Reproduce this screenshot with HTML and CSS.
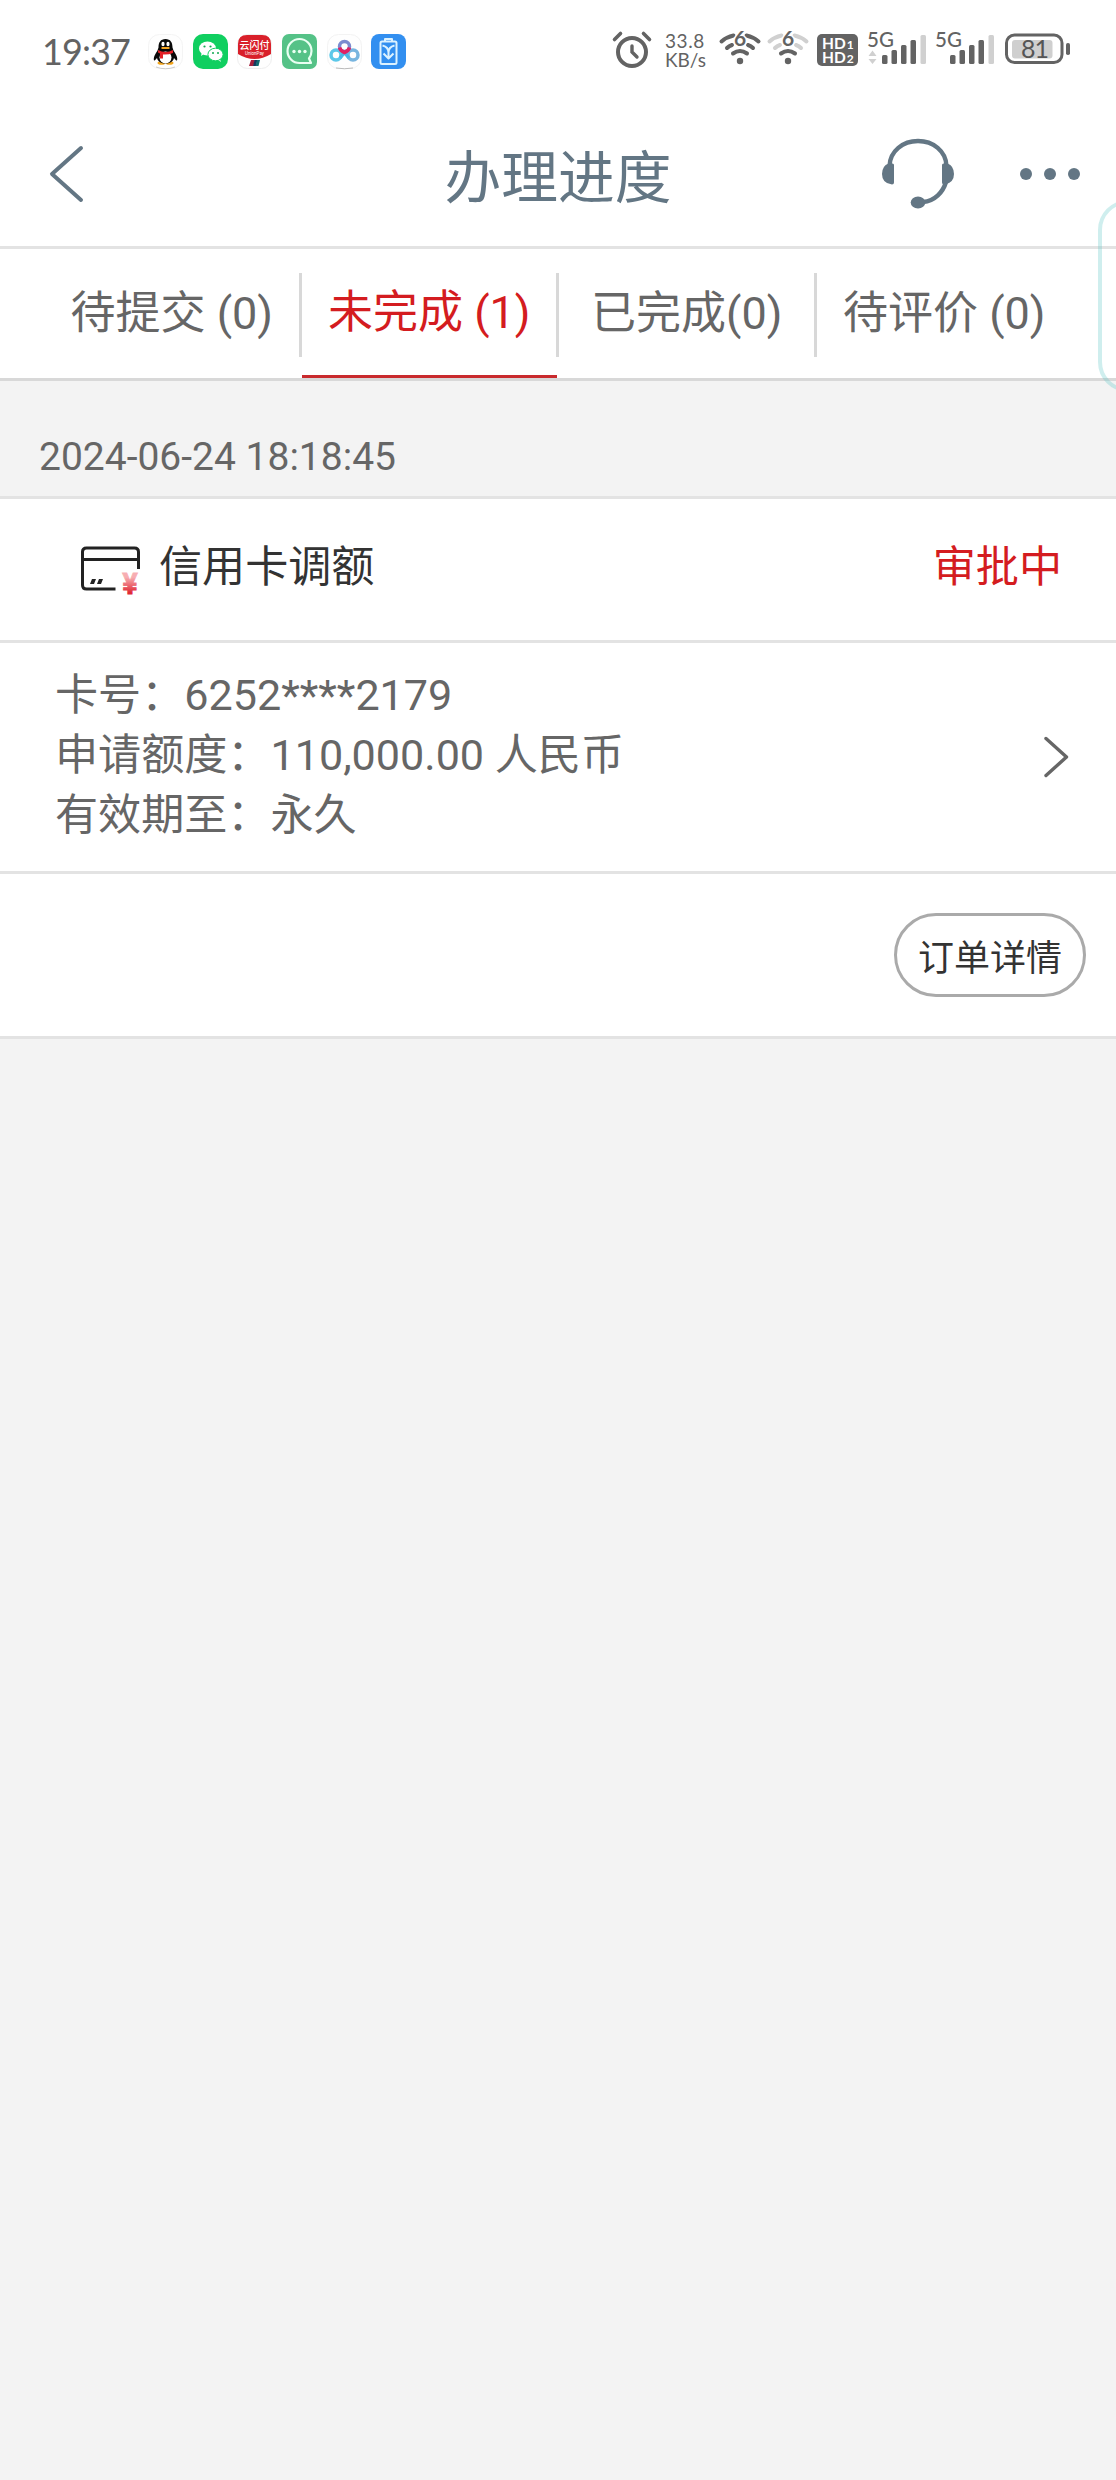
FILE: index.html
```html
<!DOCTYPE html>
<html lang="zh-CN">
<head>
<meta charset="utf-8">
<title>办理进度</title>
<link rel="stylesheet" href="styles.css">
</head>
<body>
<div class="screen">
  <div class="statusbar">
    <span class="clock">19:37</span>
    <div class="apps">
      <svg class="app" viewBox="0 0 35 35">
        <rect x=".5" y=".5" width="34" height="34" rx="11" fill="#fefefe" stroke="#f4f4f4"/>
        <path d="M8 33Q17.500 36.500 27 33" fill="none" stroke="#ccc"/>
        <ellipse cx="13.500" cy="29" rx="4" ry="1.800" fill="#f2a51d"/><ellipse cx="21.500" cy="29" rx="4" ry="1.800" fill="#f2a51d"/>
        <path d="M17.500 5c-5 0-7 3.500-7 8.500l-1 3c-2 3-4.500 7-3.500 10 1 .5 2-1.500 3-2.500 1 4 4.500 5.500 8.500 5.500s7.500-1.500 8.500-5.500c1 1 2 3 3 2.500 1-3-1.500-7-3.500-10l-1-3c0-5-2-8.500-7-8.500z" fill="#090909"/>
        <ellipse cx="17.500" cy="23.500" rx="6" ry="6" fill="#fff"/>
        <ellipse cx="15" cy="10" rx="1.600" ry="2.300" fill="#fff"/><ellipse cx="20" cy="10" rx="1.600" ry="2.300" fill="#fff"/>
        <path d="M13.500 14h8" stroke="#f5a623" stroke-width="2"/>
        <path d="M10 16q7.500 4 15 0v3q-5 2-10 1.500v4h-3v-5l-2-1z" fill="#e32026"/>
      </svg>
      <svg class="app" viewBox="0 0 35 35">
        <rect width="35" height="35" rx="10" fill="#10cf60"/>
        <path d="M8 22l1-4h5z" fill="#fff"/><ellipse cx="14.500" cy="14.500" rx="8.500" ry="7" fill="#fff"/>
        <path d="M28 28l-1.500-4h-4z" fill="#fff"/><ellipse cx="22.500" cy="20.500" rx="7.600" ry="6.300" fill="#fff" stroke="#10cf60"/>
        <g fill="#10a950"><circle cx="11.500" cy="12.500" r="1.100"/><circle cx="17.500" cy="12.500" r="1.100"/><circle cx="20" cy="19" r="1"/><circle cx="25" cy="19" r="1"/></g>
      </svg>
      <svg class="app" viewBox="0 0 35 35">
        <rect x=".5" y=".5" width="34" height="34" rx="10" fill="#fefefe" stroke="#eee"/>
        <path d="M1 20V10Q1 1 10 1h15q9 0 9 9v10Q26 25 17.500 25T1 20z" fill="#d9202a"/>
        <text x="17.500" y="15" class="pay-name">云闪付</text>
        <text x="17.500" y="20.500" class="pay-sub">UnionPay</text>
        <path d="M14 26h4l-1.500 6H12z" fill="#a51f3c"/><path d="M17.500 26h3L19 32h-3z" fill="#17375d"/><path d="M20 26h3l-1.500 6h-3z" fill="#116b70"/>
      </svg>
      <svg class="app" viewBox="0 0 35 35">
        <rect width="35" height="35" rx="7" fill="#55c287"/>
        <path d="M29 29h-11.500a12 12 0 1 1 12-12q0 4-2.500 7.500z" fill="none" stroke="#e9fff2" stroke-width="2.200" stroke-linejoin="round"/>
        <g fill="#e9fff2"><circle cx="12" cy="17.500" r="1.700"/><circle cx="17.500" cy="17.500" r="1.700"/><circle cx="23" cy="17.500" r="1.700"/></g>
      </svg>
      <svg class="app" viewBox="0 0 35 35">
        <rect x=".5" y=".5" width="34" height="34" rx="11" fill="#fefefe" stroke="#f3f3f3"/>
        <path d="M9 34Q17.500 35.500 26 34" fill="none" stroke="#bbb"/>
        <g fill="none" stroke-width="3.500"><circle cx="9" cy="21" r="5" stroke="#5cc8e9"/><circle cx="26" cy="21" r="5" stroke="#78b5df"/><path d="M13 24l5-6M22 24l-5-6" stroke="#4ab9e6"/><circle cx="17.500" cy="12.500" r="5" stroke="#7b8bd0"/><path d="M12.500 13.500q1 3.500 5 5 4-1.500 5-5" stroke="#df2264"/></g>
      </svg>
      <svg class="app" viewBox="0 0 35 35">
        <rect width="35" height="35" rx="8" fill="#328ff0"/>
        <g fill="none" stroke="#dcf2ff" stroke-width="2" stroke-linejoin="round"><rect x="9.500" y="7.500" width="16" height="22.500" rx="1.500"/><path d="M14 7V5h7v2M11.500 11.500q6 1.500 6 7v6M23.500 11.500q-6 1.500-6 7v6M12.500 19.500l5 5 5-5"/></g>
      </svg>
    </div>
    <div class="system">
      <svg class="sys alarm" viewBox="0 0 40 40">
        <g fill="none" stroke="#636363" stroke-linecap="round"><circle cx="20" cy="22" r="14" stroke-width="4"/><path d="M2.500 9.500l6-6M37.500 9.500l-6-6" stroke-width="3.600"/><path d="M20 16v6l5 5" stroke-width="3.400"/></g>
      </svg>
      <div class="speed"><span>33.8</span><span>KB/s</span></div>
      <svg class="sys wifi" viewBox="0 0 42 40">
        <g fill="none" stroke="#636363" stroke-width="4" stroke-linecap="round"><path d="M2.500 11.500q5-4.500 12-6M39.500 11.500q-5-4.500-12-6M8 18q2-2 5-3M34 18q-2-2-5-3M14 23.500q7-5 14 0"/></g>
        <circle cx="21" cy="31" r="3.200" fill="#636363"/><text x="21" y="16" class="six">6</text>
      </svg>
      <svg class="sys wifi wifi-second" viewBox="0 0 42 40">
        <g fill="none" stroke="#d0d0d0" stroke-width="4" stroke-linecap="round"><path d="M2.500 11.500q5-4.500 12-6M39.500 11.500q-5-4.500-12-6M8 18q2-2 5-3M34 18q-2-2-5-3"/><path d="M14 23.500q7-5 14 0" stroke="#636363"/></g>
        <circle cx="21" cy="31" r="3.200" fill="#636363"/><text x="21" y="16" class="six">6</text>
      </svg>
      <div class="hd"><span>HD<small>1</small></span><span>HD<small>2</small></span></div>
      <svg class="sys signal" viewBox="0 0 60 40">
        <text x="0" y="16.500" class="net">5G</text>
        <path d="M1.500 26l4-5.500 4 5.500zM1.500 29l4 5 4-5z" fill="#d0d0d0"/>
        <g fill="#636363"><rect x="15" y="25" width="5.500" height="9" rx="1.500"/><rect x="24.500" y="20" width="5.500" height="14" rx="1.500"/><rect x="34" y="15" width="5.500" height="19" rx="1.500"/><rect x="43.500" y="10" width="5.500" height="24" rx="1.500"/></g><rect x="53.500" y="5" width="5.500" height="29" rx="1.500" fill="#d0d0d0"/>
      </svg>
      <svg class="sys signal signal-second" viewBox="0 0 60 40">
        <text x="0" y="16.500" class="net">5G</text>
        <g fill="#636363"><rect x="15" y="25" width="5.500" height="9" rx="1.500"/><rect x="24.500" y="20" width="5.500" height="14" rx="1.500"/><rect x="34" y="15" width="5.500" height="19" rx="1.500"/><rect x="43.500" y="10" width="5.500" height="24" rx="1.500"/></g><rect x="53.500" y="5" width="5.500" height="29" rx="1.500" fill="#d0d0d0"/>
      </svg>
      <svg class="sys battery" viewBox="0 0 66 40">
        <rect x="1.500" y="5" width="55.500" height="27.500" rx="8" fill="none" stroke="#636363" stroke-width="3"/>
        <rect x="7" y="10" width="40.500" height="18.500" rx="3" fill="#cfcfcf"/><rect x="61" y="13" width="4" height="12" rx="1.800" fill="#636363"/>
        <text x="29.500" y="28" class="level">81</text>
      </svg>
    </div>
  </div>

  <header class="header">
    <svg class="back" viewBox="0 0 40 60"><path d="M35 4L6 30l29 26" fill="none" stroke="#637684" stroke-width="4" stroke-linecap="round" stroke-linejoin="round"/></svg>
    <h1 class="title">办理进度</h1>
    <div class="actions">
      <svg class="headset" viewBox="0 0 72 72">
        <g fill="none" stroke="#637684" stroke-width="4.400"><path d="M7.500 28C8 13 21 3 36 3s28 10 28.500 25M64 44c-3 10-11 19-23 20"/></g>
        <path d="M6.500 25.500h4q1.500 0 1.500 1.500v17.500q0 2-2 2-10-1-10-10.500 0-8 6.500-10.500zM65.500 25.500h-4q-1.500 0-1.500 1.500v17.500q0 2 2 2 10-1 10-10.500 0-8-6.500-10.500z" fill="#637684"/><ellipse cx="36" cy="64.500" rx="7.300" ry="6" fill="#637684"/>
      </svg>
      <svg class="more" viewBox="0 0 60 12"><g fill="#637684"><circle cx="6" cy="6" r="6"/><circle cx="30" cy="6" r="6"/><circle cx="54" cy="6" r="6"/></g></svg>
    </div>
  </header>

  <nav class="tabs">
    <a class="tab">待提交 (0)</a>
    <a class="tab tab-active">未完成 (1)</a>
    <a class="tab">已完成(0)</a>
    <a class="tab">待评价 (0)</a>
  </nav>

  <time class="date">2024-06-24 18:18:45</time>

  <section class="order">
    <div class="order-head">
      <svg class="card-icon" viewBox="0 0 60 52">
        <defs><linearGradient id="yen" x1="0" y1="0" x2="0" y2="1"><stop offset=".3" stop-color="#f7aeb2"/><stop offset=".75" stop-color="#e02a35"/></linearGradient></defs>
        <path d="M36 45H7q-4 0-4-4V8q0-4 4-4h48q4 0 4 4v17M3 15.500h56" transform="translate(-.5 -2)" fill="none" stroke="#222" stroke-width="3"/>
        <path d="M10 38l2-5h4L14 38zM17 38l2-5h4L21 38z" fill="#222"/>
        <text x="50" y="48" class="yen" fill="url(#yen)" stroke="url(#yen)">¥</text>
      </svg>
      <span class="order-name">信用卡调额</span>
      <span class="order-status">审批中</span>
    </div>
    <div class="order-body">
      <div class="details"><p>卡号：6252****2179</p><p>申请额度：110,000.00 人民币</p><p>有效期至：永久</p></div>
      <svg class="chevron" viewBox="0 0 26 42"><path d="M3 2.500L23.500 21 3 39.500" fill="none" stroke="#666" stroke-width="3.400" stroke-linecap="round" stroke-linejoin="round"/></svg>
    </div>
    <div class="order-foot"><button class="detail-button">订单详情</button></div>
  </section>
  <div class="edge-handle"></div>
</div>
</body>
</html>
```
FILE: styles.css
```css
* { box-sizing: border-box; }
body { margin: 0; background: #f3f3f3; color: #666; font-family: Roboto, "Noto Sans CJK SC", sans-serif; }
h1, p { margin: 0; font-weight: 400; }
svg { display: block; flex: none; overflow: visible; }
.screen { position: relative; width: 1116px; height: 2480px; overflow: hidden; }

.statusbar { display: flex; height: 100px; padding: 0 45px 0 42px; background: #fff; color: #636363; font-family: Lato, sans-serif; }
.clock { width: 106px; padding-top: 30px; font-size: 36px; line-height: 42px; letter-spacing: -.9px; white-space: nowrap; }
.apps { display: flex; gap: 9.700px; padding-top: 34px; }
.app { width: 35px; height: 35px; }
.pay-name { font: 500 10px "Noto Sans CJK SC", sans-serif; fill: #fff; text-anchor: middle; }
.pay-sub { font: 4.500px Roboto, sans-serif; fill: #fff; text-anchor: middle; }
.system { display: flex; margin-left: auto; padding-top: 30px; }
.sys { height: 40px; }
.alarm { width: 40px; }
.speed { display: flex; flex-direction: column; width: 54px; margin-left: 13px; padding-top: 1px; font-size: 19px; line-height: 19px; white-space: nowrap; }
.speed span:first-child { letter-spacing: .6px; }
.wifi { width: 42px; }
.wifi-second { margin-left: 6px; }
.six { font: 700 21px Lato, sans-serif; fill: #636363; stroke: #fff; stroke-width: 3px; paint-order: stroke; text-anchor: middle; }
.hd { display: flex; flex-direction: column; width: 41px; height: 32px; margin: 4px 0 0 8px; padding: 2px 0 0 5px; border-radius: 5px; background: #636363; color: #fff; font: 700 15.500px/14px Lato, sans-serif; white-space: nowrap; }
.hd span { height: 14px; }
.hd small { font-size: 12px; line-height: 1; margin-left: 1px; }
.signal { width: 60px; margin-left: 9px; }
.signal-second { margin-left: 8px; }
.net { font: 500 20.500px Lato, sans-serif; fill: #636363; }
.battery { width: 66px; margin-left: 10px; }
.level { font: 25px Lato, sans-serif; fill: #555; text-anchor: middle; letter-spacing: -1px; }

.header { display: grid; grid-template-columns: 1fr auto 1fr; align-items: center; height: 149px; padding: 2px 36px 0 46px; border-bottom: 3px solid #e3e3e3; background: #fff; }
.back { width: 40px; height: 60px; }
.title { padding: 9px 10px 0 0; color: #637684; font-size: 56.700px; line-height: 80px; }
.actions { display: flex; align-items: center; justify-content: flex-end; gap: 66px; }
.headset { width: 72px; height: 72px; }
.more { width: 60px; height: 12px; }

.tabs { display: grid; grid-template-columns: repeat(4, 1fr); height: 132px; padding: 0 42px 0 44px; border-bottom: 3px solid #d8d8d8; background: #fff; }
.tab { display: flex; justify-content: center; padding: 32px 2px 0 0; font-size: 45px; line-height: 66px; white-space: pre; background: linear-gradient(#d8d8d8, #d8d8d8) right 24px / 3px 84px no-repeat; }
.tab:last-child { background: none; }
.tab-active { padding-top: 31px; color: #d41c20; background: linear-gradient(#d8d8d8, #d8d8d8) right 24px / 3px 84px no-repeat, linear-gradient(90deg, #c92a2d 255px, transparent 0) bottom / 100% 3px no-repeat; }

.date { display: block; height: 115px; padding: 50px 0 0 39px; font-size: 39px; line-height: 52px; }
.order { border-top: 3px solid #e3e3e3; border-bottom: 3px solid #e3e3e3; background: #fff; }
.order-head { display: flex; align-items: center; height: 144px; padding: 0 54px 3px 80px; border-bottom: 3px solid #e3e3e3; font-size: 43.100px; line-height: 60px; }
.card-icon { width: 60px; height: 52px; margin-top: 7px; }
.yen { font: 700 29px Roboto, sans-serif; text-anchor: middle; stroke-width: .8px; }
.order-name { margin-left: 19px; color: #333; }
.order-status { margin-left: auto; color: #d41c20; }
.order-body { display: flex; align-items: center; justify-content: space-between; height: 231px; padding: 0 47px 0 55px; border-bottom: 3px solid #e3e3e3; font-size: 43.100px; line-height: 60px; }
.details { padding-bottom: 3px; }
.chevron { width: 26px; height: 42px; }
.order-foot { display: flex; align-items: center; justify-content: flex-end; height: 162px; padding-right: 30px; }
.detail-button { width: 192px; height: 84px; padding: 0; border: 3px solid #aaa; border-radius: 42px; background: #fff; color: #333; font: 36px/50px "Noto Sans CJK SC", sans-serif; }
.edge-handle { position: absolute; left: 1098px; top: 200px; width: 80px; height: 192px; border: 4px solid rgba(95, 200, 200, .3); border-radius: 30px; }
```
